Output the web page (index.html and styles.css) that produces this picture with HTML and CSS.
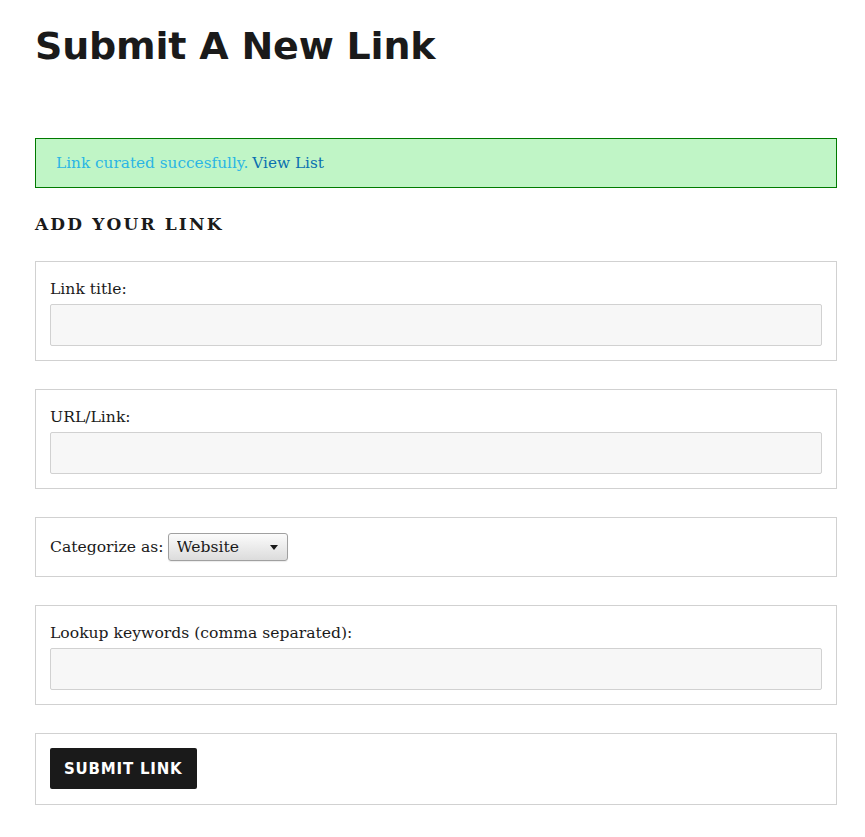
FILE: index.html
```html
<!DOCTYPE html>
<html>
<head>
<meta charset="utf-8">
<link rel="stylesheet" href="styles.css">
</head>
<body>
<main class="page">
  <h1 class="title">Submit A New Link</h1>
  <div class="notice">Link curated succesfully. <a class="notice-link" href="#">View List</a></div>
  <h2 class="section">Add Your Link</h2>
  <form class="form">
    <div class="field">
      <label class="label">Link title:</label>
      <input class="input" type="text">
    </div>
    <div class="field">
      <label class="label">URL/Link:</label>
      <input class="input" type="text">
    </div>
    <div class="field field-inline">
      <label class="label-inline">Categorize as:</label>
      <span class="select-wrap">
        <select class="select"><option>Website</option></select>
      </span>
    </div>
    <div class="field">
      <label class="label">Lookup keywords (comma separated):</label>
      <input class="input" type="text">
    </div>
    <div class="field field-button">
      <button class="button" type="button">Submit Link</button>
    </div>
  </form>
</main>
</body>
</html>
```
FILE: styles.css
```css
html, body {
  margin: 0;
  padding: 0;
  background: #fff;
}
body {
  font-family: "DejaVu Serif", "Liberation Serif", serif;
  font-size: 15.6px;
  color: #1a1a1a;
}
.page {
  width: 802px;
  margin-left: 35px;
  padding-top: 22px;
}
.title {
  font-family: "DejaVu Sans", sans-serif;
  font-weight: bold;
  font-size: 38px;
  line-height: 48px;
  margin: 0 0 68px 0;
  color: #1a1a1a;
  letter-spacing: -0.2px;
}
.notice {
  background: #c0f5c6;
  border: 1px solid #007a00;
  height: 48px;
  box-sizing: content-box;
  display: flex;
  align-items: center;
  padding: 0 20px;
  color: #2ab5e4;
  font-size: 15.3px;
}
.notice-link {
  color: #0a6fb0;
  text-decoration: none;
  margin-left: 4px;
}
.section {
  font-family: "DejaVu Serif", serif;
  font-weight: bold;
  font-size: 17px;
  letter-spacing: 2.15px;
  text-transform: uppercase;
  margin: 24px 0 25px 0;
  line-height: 24px;
}
.field {
  border: 1px solid #d1d1d1;
  padding: 14px;
  margin-bottom: 28px;
}
.label {
  display: block;
  line-height: 26px;
  margin-bottom: 2px;
}
.input {
  display: block;
  width: 100%;
  box-sizing: border-box;
  height: 42px;
  background: #f7f7f7;
  border: 1px solid #d1d1d1;
  border-radius: 2px;
  margin: 0;
}
.field-inline {
  display: flex;
  align-items: center;
  height: 30px;
  padding-top: 14px;
  padding-bottom: 14px;
}
.label-inline {
  margin-right: 4px;
}
.select-wrap {
  position: relative;
  display: inline-block;
}
.select-wrap::after {
  content: "";
  position: absolute;
  right: 10px;
  top: 12px;
  border-left: 4.5px solid transparent;
  border-right: 4.5px solid transparent;
  border-top: 5px solid #1a1a1a;
  pointer-events: none;
}
.select {
  appearance: none;
  -webkit-appearance: none;
  font-family: "DejaVu Serif", serif;
  font-size: 15.6px;
  color: #1a1a1a;
  width: 120px;
  height: 28px;
  padding: 0 0 0 8px;
  border: 1px solid #a0a0a0;
  border-radius: 3px;
  background: linear-gradient(#fbfbfb, #dcdcdc);
  box-shadow: 0 1px 1px rgba(0,0,0,0.08);
  display: block;
}
.field-button {
  padding-bottom: 15px;
}
.button {
  font-family: "DejaVu Sans", sans-serif;
  font-weight: bold;
  font-size: 15px;
  letter-spacing: 0.8px;
  text-transform: uppercase;
  color: #fff;
  background: #1a1a1a;
  border: none;
  border-radius: 2px;
  height: 41px;
  padding: 0 14px;
  display: block;
}
```
